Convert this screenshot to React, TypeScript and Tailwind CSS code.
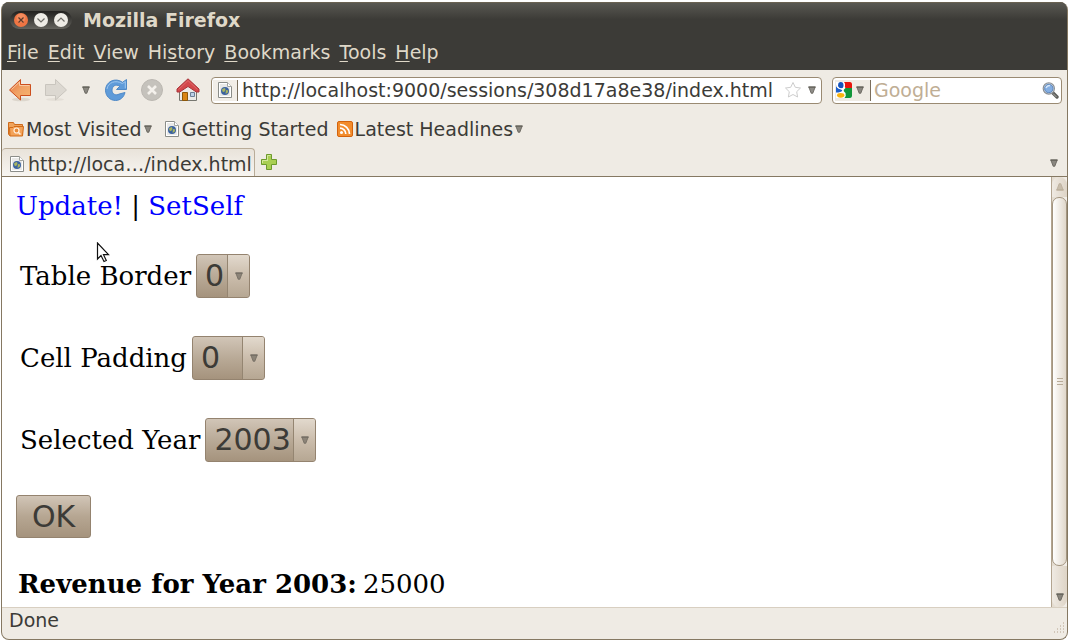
import { useId, useState, type ReactNode } from "react";

function Caret({ className = "text-[#5f5d55]" }: { className?: string }) {
  return (
    <svg width="8" height="8" viewBox="0 0 8 8" className={"shrink-0 " + className} aria-hidden="true">
      <path d="M.8 1H7.2L4.800 7.300H3.200Z" fill="currentColor" fillOpacity=".7" stroke="currentColor" strokeWidth=".8" />
      <path d="M.3 1H7.700" stroke="currentColor" />
    </svg>
  );
}

function PageIcon() {
  return (
    <svg width="16" height="16" viewBox="0 0 16 16" className="shrink-0" aria-hidden="true">
      <path d="M1.500 .5H10.500L14.500 4.500V15.500H1.500Z" fill="#fff" stroke="#8b8d89" strokeLinejoin="round" />
      <path d="M3 2H10V5H13V14H3Z" fill="#e9e9e7" />
      <path d="M10.500 .5V4.500H14.500" fill="#fff" stroke="#a3a5a1" />
      <circle cx="8" cy="9" r="4" fill="#3a62a0" />
      <path d="M5.200 7L8 6L8.500 8L7 10.300L5.200 9.200ZM9 8L11.300 8.500L10.500 11L8.500 11.800Z" fill="#a9b560" />
    </svg>
  );
}

function BackIcon() {
  return (
    <svg width="24" height="24" viewBox="0 0 24 24" aria-hidden="true">
      <defs>
        <linearGradient id="back" x1="0" y1="0" x2="1" y2="1">
          <stop offset="0" stopColor="#e8723a" />
          <stop offset=".5" stopColor="#f0a266" />
          <stop offset="1" stopColor="#f9b46e" />
        </linearGradient>
      </defs>
      <ellipse cx="13" cy="21.500" rx="9" ry="1.800" fill="#dcd6cc" />
      <path d="M1.500 12L12.500 1.500V6.500H22.500V17.500H12.500V22Z" fill="url(#back)" stroke="#cc4f1e" strokeLinejoin="round" />
      <path d="M3.500 11.500L11.500 4V7.500H21.500" fill="none" stroke="#f8c8a2" />
    </svg>
  );
}

function ForwardIcon() {
  return (
    <svg width="24" height="24" viewBox="0 0 24 24" aria-hidden="true">
      <ellipse cx="11" cy="21.500" rx="9" ry="1.500" fill="#e4dfd7" />
      <path d="M22.500 12L11.500 1.500V6.500H1.500V17.500H11.500V22Z" fill="#dcd8d1" stroke="#c9c5be" strokeLinejoin="round" />
    </svg>
  );
}

function ReloadIcon() {
  return (
    <svg width="24" height="24" viewBox="0 0 24 24" aria-hidden="true">
      <path
        d="M18.500 4.300L22.500 1.500V11.500H12.500L15.800 8.200C11.500 5.500 8 8.500 8 12.200C8 16.200 12 18 15.200 16L21 14.500C19.800 19.500 16 22.500 11.500 22.500C6 22.500 1.500 18 1.500 12.200C1.500 3.600 11.500-1 18.500 4.300Z"
        fill="#5f9bd9"
        stroke="#5089c6"
        strokeLinejoin="round"
      />
      <path d="M3 11C4 4.400 11.500 1.600 18.400 5.500L21.300 3.600V10.300" fill="none" stroke="#9cc6ef" />
    </svg>
  );
}

function StopIcon() {
  return (
    <svg width="24" height="24" viewBox="0 0 24 24" aria-hidden="true">
      <circle cx="12" cy="12" r="10.500" fill="#c5c2bc" stroke="#bbb7b1" />
      <path d="M8 8L16 16M16 8L8 16" stroke="#f4f1ec" strokeWidth="2.600" />
    </svg>
  );
}

function HomeIcon() {
  return (
    <svg width="24" height="24" viewBox="0 0 24 24" aria-hidden="true">
      <path d="M3.500 12L12 5L20.500 12V22.500H3.500Z" fill="#ecebe8" stroke="#777770" />
      <path d="M6.500 14.500H11.500V22.500H6.500Z" fill="#d98414" stroke="#8c5709" />
      <path d="M14.500 14.500H18.500V18.500H14.500Z" fill="#bcd0e8" stroke="#6d7f97" />
      <path d="M12 .8L23 11V14H20.300L12 8.500L3.700 14H1V11Z" fill="#d3484b" stroke="#a8353a" strokeLinejoin="round" />
      <path d="M2.500 11.500L12 2.600L21.500 11.500" fill="none" stroke="#e06a6c" />
    </svg>
  );
}

function FolderIcon() {
  return (
    <svg width="16" height="16" viewBox="0 0 16 16" className="shrink-0" aria-hidden="true">
      <path d="M.5 1.500H5.500L6.500 3.500H14.500V14.500H1.500L.5 13Z" fill="#f0a45c" stroke="#cf6b1c" />
      <path d="M1.500 6.500H5L6 5.500H15.500L14.500 15H2Z" fill="#f3a35a" stroke="#d26b17" />
      <circle cx="8.500" cy="9.500" r="2.500" fill="#e98a38" stroke="#fff3e4" strokeWidth="1.200" />
      <path d="M10.500 11.500L12.500 13.500" stroke="#fff3e4" strokeWidth="1.400" />
    </svg>
  );
}

function FeedIcon() {
  return (
    <svg width="16" height="16" viewBox="0 0 16 16" className="shrink-0" aria-hidden="true">
      <rect x=".5" y=".5" width="15" height="15" rx="1.500" fill="#f28c2c" stroke="#d4630c" />
      <circle cx="4.500" cy="11.500" r="1.500" fill="#fff" />
      <path d="M3 7.200A5.800 5.800 0 0 1 8.800 13M3 3.500A9.500 9.500 0 0 1 12.500 13" fill="none" stroke="#fff" strokeWidth="1.700" />
    </svg>
  );
}

function GoogleIcon() {
  return (
    <svg width="16" height="16" viewBox="0 0 16 16" className="shrink-0" aria-hidden="true">
      <rect width="16" height="16" fill="#fff" />
      <path d="M8 0H14Q16 0 16 2V6H9.500Q8.500 5 9 3.500Q9.500 1.500 8 0Z" fill="#e8150d" />
      <path d="M9.500 6H16V14Q16 16 14 16H8.500Q10.500 14 9.500 11Q7 9 8 7.500Z" fill="#12963a" />
      <path d="M0 3Q1 6.500 5 7.300L6.300 8.500Q5 10.500 0 10.500Z" fill="#1b5fcb" />
      <ellipse cx="4.800" cy="3.200" rx="2.700" ry="3.200" fill="#1553bd" />
      <path d="M.5 3.500Q2 7 6 7" stroke="#fff" fill="none" strokeWidth="1.200" />
      <ellipse cx="4.700" cy="13.300" rx="3.700" ry="2.400" fill="#fab40f" />
    </svg>
  );
}

function SearchIcon() {
  return (
    <svg width="17" height="17" viewBox="0 0 17 17" aria-hidden="true">
      <path d="M10.500 10.500L15 15" stroke="#5e5f5b" strokeWidth="3.400" strokeLinecap="round" />
      <path d="M11 11.500L14.500 15" stroke="#aaa" strokeWidth="1" />
      <circle cx="6.800" cy="6.500" r="5.600" fill="#dfe6ee" stroke="#8b9096" strokeWidth="1.200" />
      <circle cx="6.800" cy="6.500" r="4.200" fill="#84aee2" stroke="#5a85bb" />
      <path d="M4 6Q5 3.500 8 3.500" stroke="#d4e6fa" fill="none" strokeWidth="1.400" />
    </svg>
  );
}

function ToolButton({ label, children, disabled }: { label: string; children: ReactNode; disabled?: boolean }) {
  return (
    <button type="button" aria-label={label} disabled={disabled} className="flex shrink-0 items-center justify-center">
      {children}
    </button>
  );
}

function Select({ label, options, initial, width }: { label: string; options: string[]; initial: string; width: string }) {
  const id = useId();
  const [value, setValue] = useState(initial);
  return (
    <div className="flex h-11 items-center gap-[5px] pl-1">
      <label htmlFor={id}>{label}</label>
      <div className={"relative h-11 " + width}>
        <select
          id={id}
          value={value}
          onChange={(e) => setValue(e.target.value)}
          className="h-11 w-full appearance-none rounded-[3px] border border-[#94836f] bg-linear-to-b from-[#d1c5b7] via-[#b9aa97] to-[#a5937d] pl-2 font-['DejaVu_Sans',sans-serif] text-[30px] leading-10 text-[#3c3b37]"
        >
          {options.map((o) => (
            <option key={o}>{o}</option>
          ))}
        </select>
        <span className="pointer-events-none absolute inset-y-px right-px flex w-[22px] items-center justify-center rounded-r-[2px] border-l border-[#948571] bg-linear-to-b from-[#e2d9cd] via-[#cbbdac] to-[#b6a793]">
          <Caret className="text-[#716b61]" />
        </span>
      </div>
    </div>
  );
}

const menus: [string, string, string][] = [
  ["", "F", "ile"],
  ["", "E", "dit"],
  ["", "V", "iew"],
  ["Hi", "s", "tory"],
  ["", "B", "ookmarks"],
  ["", "T", "ools"],
  ["", "H", "elp"],
];

export default function App() {
  return (
    <div className="flex min-h-screen flex-col bg-white pt-0.5 pr-0.5 pb-0.5 pl-px font-['DejaVu_Sans',sans-serif] text-[19px] leading-6 text-[#3c3b37]">
      <div className="flex flex-1 flex-col overflow-hidden rounded-lg border border-t-0 border-[#857862] bg-[#efebe4]">
        <header className="bg-[#3c3b37] text-[#dfd8c8]">
          <div className="flex h-[34px] items-center gap-[11px] border-t border-[#6a6252] bg-linear-to-b from-[#595852] to-[#3c3b37] to-50% pl-2">
            <div className="flex h-[18px] items-center gap-1 rounded-full bg-linear-to-b from-[#22211f] to-[#65645e] px-[3px]">
              <button type="button" aria-label="Close" className="size-4">
                <svg width="16" height="16" viewBox="0 0 16 16" aria-hidden="true">
                  <circle cx="8" cy="8" r="7" fill="#ef7543" />
                  <circle cx="8" cy="6" r="4.500" fill="#f69a70" fillOpacity=".6" />
                  <path d="M5.500 5.500L10.500 10.500M10.500 5.500L5.500 10.500" stroke="#5c3a2b" strokeWidth="1.200" />
                </svg>
              </button>
              <button type="button" aria-label="Minimize" className="size-4">
                <svg width="16" height="16" viewBox="0 0 16 16" aria-hidden="true">
                  <circle cx="8" cy="8" r="7" fill="#eeece6" />
                  <path d="M4.500 6.500L8 10L11.500 6.500" fill="none" stroke="#6f6e68" strokeWidth="1.200" />
                </svg>
              </button>
              <button type="button" aria-label="Maximize" className="size-4">
                <svg width="16" height="16" viewBox="0 0 16 16" aria-hidden="true">
                  <circle cx="8" cy="8" r="7" fill="#eeece6" />
                  <path d="M4.500 9.500L8 6L11.500 9.500" fill="none" stroke="#6f6e68" strokeWidth="1.200" />
                </svg>
              </button>
            </div>
            <h1 className="font-bold">Mozilla Firefox</h1>
          </div>
          <nav className="flex h-[34px] items-start gap-[9px] pt-1 pl-[5px]">
            {menus.map(([a, u, b]) => (
              <button key={u + b} type="button">
                {a}
                <span className="underline decoration-1 underline-offset-2">{u}</span>
                {b}
              </button>
            ))}
          </nav>
        </header>

        <div className="flex h-10 items-center pr-[5px] pl-1.5">
          <ToolButton label="Back"><BackIcon /></ToolButton>
          <div className="ml-3 flex"><ToolButton label="Forward" disabled><ForwardIcon /></ToolButton></div>
          <div className="ml-3.5 flex"><ToolButton label="Recent pages"><Caret /></ToolButton></div>
          <div className="ml-3.5 flex gap-3">
            <ToolButton label="Reload"><ReloadIcon /></ToolButton>
            <ToolButton label="Stop" disabled><StopIcon /></ToolButton>
            <ToolButton label="Home"><HomeIcon /></ToolButton>
          </div>
          <div className="ml-[11px] flex h-[27px] flex-1 items-center rounded-[4px] border border-[#9a8a72] bg-white pr-[5px]">
            <span className="ml-px flex h-[21px] w-[25px] items-center justify-center border-r border-[#7b6f5d] bg-[#f2eee8]"><PageIcon /></span>
            <input
              aria-label="Address"
              defaultValue="http://localhost:9000/sessions/308d17a8e38/index.html"
              className="min-w-0 flex-1 bg-transparent pl-1 outline-none"
            />
            <button type="button" aria-label="Bookmark this page" className="mr-1.5">
              <svg width="18" height="18" viewBox="0 0 18 18" className="block" aria-hidden="true">
                <path d="M9 1.500L11.300 6.300L16.500 7L12.700 10.700L13.600 16L9 13.500L4.400 16L5.300 10.700L1.500 7L6.700 6.300Z" fill="#fff" stroke="#cdcdcd" strokeLinejoin="round" />
              </svg>
            </button>
            <ToolButton label="Show history"><Caret /></ToolButton>
          </div>
          <div className="ml-2.5 flex h-[27px] w-[230px] shrink items-center rounded-[4px] border border-[#9a8a72] bg-white pr-0.5 pl-0.5">
            <button type="button" aria-label="Choose search engine" className="flex h-[21px] w-9 shrink-0 items-center gap-1 border-r border-[#7b6f5d] bg-[#efebe4] pl-px">
              <GoogleIcon />
              <Caret />
            </button>
            <input aria-label="Search" placeholder="Google" className="min-w-0 flex-1 bg-transparent pl-[3px] outline-none placeholder:text-[#bfae95]" />
            <ToolButton label="Search"><SearchIcon /></ToolButton>
          </div>
        </div>

        <div className="flex h-[38px] items-center gap-3 pl-1.5">
          <button type="button" className="flex items-center gap-0.5"><FolderIcon />Most Visited<Caret /></button>
          <a href="#getting-started" className="flex items-center gap-0.5"><PageIcon />Getting Started</a>
          <button type="button" className="-ml-1 flex items-center gap-0.5"><FeedIcon />Latest Headlines<Caret /></button>
        </div>

        <div className="flex h-[29px] items-end justify-between border-b border-[#857862] pr-[9px]">
          <div className="flex h-7 items-center gap-1.5">
            <button type="button" className="flex h-7 items-center gap-[3px] rounded-t-[4px] border border-b-0 border-l-0 border-[#b9ac98] bg-linear-to-b from-[#e9e3da] to-[#f7f5f1] pt-0.5 pr-0.5 pl-[7px]">
              <PageIcon />
              http://loca…/index.html
            </button>
            <ToolButton label="New tab">
              <svg width="16" height="16" viewBox="0 0 16 16" aria-hidden="true">
                <path d="M5.500 .5H10.500V5.500H15.500V10.500H10.500V15.500H5.500V10.500H.5V5.500H5.500Z" fill="#a9cf52" stroke="#6d9a2c" />
                <path d="M6.500 7V1.500H9.500M1.500 9V6.500H6.500" fill="none" stroke="#d3e89a" />
              </svg>
            </ToolButton>
          </div>
          <div className="mb-[9px] flex"><ToolButton label="List all tabs"><Caret /></ToolButton></div>
        </div>

        <div className="flex flex-1 bg-white">
          <main className="relative flex-1 px-3.5 pt-[13px] font-['DejaVu_Serif',serif] text-[26px] leading-8 text-black">
            <p>
              <a href="#update" className="text-[#0000ff]">Update!</a> | <a href="#setself" className="text-[#0000ff]">SetSelf</a>
            </p>
            <form className="pt-8" onSubmit={(e) => e.preventDefault()}>
              <div className="flex flex-col gap-[38px]">
                <Select label="Table Border" options={["0", "1", "2"]} initial="0" width="w-[54px]" />
                <Select label="Cell Padding" options={["0", "5", "10"]} initial="0" width="w-[73px]" />
                <Select label="Selected Year" options={["2003", "2004", "2005"]} initial="2003" width="w-[111px]" />
              </div>
              <button
                type="submit"
                className="mt-[33px] block h-[43px] rounded-[3px] border border-[#94836f] bg-linear-to-b from-[#d1c5b7] via-[#b6a692] to-[#a5937d] px-[15px] font-['DejaVu_Sans',sans-serif] text-[30px] leading-10 text-[#3c3b37]"
              >
                OK
              </button>
            </form>
            <table className="mt-8 ml-0.5">
              <tbody>
                <tr>
                  <th scope="row" className="p-0 pr-1.5 text-left leading-7 font-bold">Revenue for Year 2003:</th>
                  <td className="p-0 leading-7">25000</td>
                </tr>
              </tbody>
            </table>
            <svg width="14" height="21" viewBox="0 0 14 21" className="absolute top-[65px] left-[94px]" aria-hidden="true">
              <path d="M1.500 1V17L5 13.500L8 19.500L10.300 18.400L7.500 12.700H12.500Z" fill="#fff" stroke="#111" strokeWidth="1.200" />
            </svg>
          </main>
          <div className="flex w-4 shrink-0 flex-col border-l border-[#b3a591] bg-linear-to-r from-[#e3dbcf] to-[#f3efe9]">
            <button type="button" aria-label="Scroll up" className="flex h-5 items-center justify-center rounded-t-lg bg-linear-to-r from-[#efeae3] to-[#ded4c6]">
              <Caret className="rotate-180 text-[#b9ac98]" />
            </button>
            <div className="flex flex-1 flex-col items-center justify-center gap-0.5 rounded-[7px] border border-[#a39580] bg-linear-to-r from-white to-[#e0d7ca]">
              <span className="h-px w-1.5 bg-[#b8ab98]" />
              <span className="h-px w-1.5 bg-[#b8ab98]" />
              <span className="h-px w-1.5 bg-[#b8ab98]" />
            </div>
            <div className="flex h-[41px] flex-col justify-end rounded-b-lg bg-linear-to-r from-[#efeae3] to-[#ded4c6]">
              <button type="button" aria-label="Scroll down" className="flex h-5 items-center justify-center">
                <Caret />
              </button>
            </div>
          </div>
        </div>

        <footer className="flex h-8 items-start justify-between border-t border-[#d8cfc1] pl-[7px]">
          <span>Done</span>
          <svg width="11" height="11" viewBox="0 0 11 11" className="mt-3.5 mr-0.5" aria-hidden="true">
            <path d="M9 1h1M6 4h1M9 4h1M3 7h1M6 7h1M9 7h1M0 10h1M3 10h1M6 10h1M9 10h1" stroke="#c7bba9" strokeWidth="1.500" />
          </svg>
        </footer>
      </div>
    </div>
  );
}
